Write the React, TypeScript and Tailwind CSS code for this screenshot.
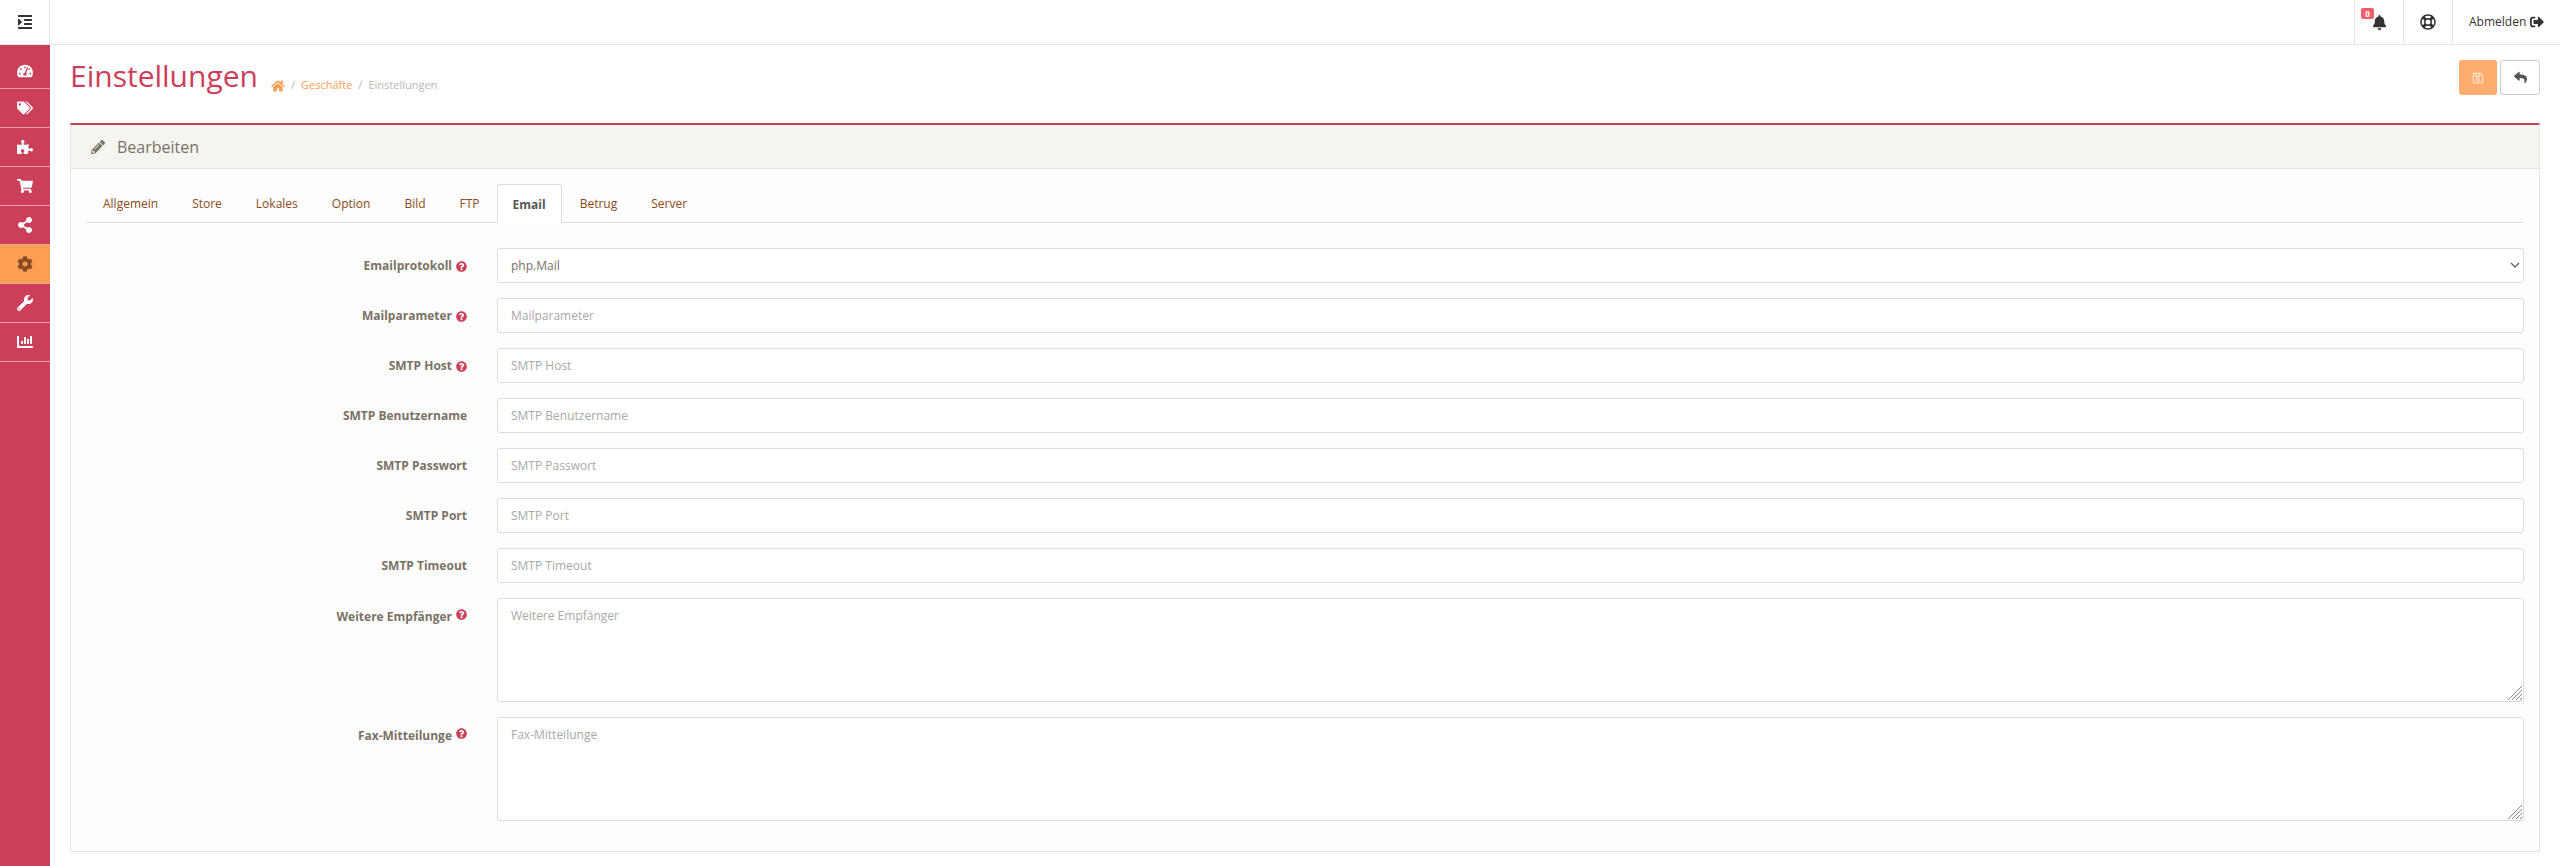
import React from "react";
import {
  FaTachometerAlt,
  FaTags,
  FaPuzzlePiece,
  FaShoppingCart,
  FaShareAlt,
  FaCog,
  FaWrench,
  FaChartBar,
  FaBell,
  FaRegLifeRing,
  FaSignOutAlt,
  FaHome,
  FaPencilAlt,
  FaRegSave,
  FaReply,
  FaQuestionCircle,
  FaIndent,
} from "react-icons/fa";

const navItems = [
  { icon: FaTachometerAlt, active: false },
  { icon: FaTags, active: false },
  { icon: FaPuzzlePiece, active: false },
  { icon: FaShoppingCart, active: false },
  { icon: FaShareAlt, active: false },
  { icon: FaCog, active: true },
  { icon: FaWrench, active: false },
  { icon: FaChartBar, active: false },
];

const tabs = ["Allgemein", "Store", "Lokales", "Option", "Bild", "FTP", "Email", "Betrug", "Server"];

const inputs = [
  { label: "Mailparameter", help: true },
  { label: "SMTP Host", help: true },
  { label: "SMTP Benutzername", help: false },
  { label: "SMTP Passwort", help: false },
  { label: "SMTP Port", help: false },
  { label: "SMTP Timeout", help: false },
];

const fieldClass =
  "w-full border border-[#dddddd] rounded-[3px] bg-white px-[13px] text-[12px] text-[#777067] placeholder:text-[#a8a8a8] outline-none";

const Label = ({ text, help, top }: { text: string; help: boolean; top?: boolean }) => (
  <label
    className={`flex justify-end gap-[4px] pr-[30px] text-[12px] font-bold text-[#7a7265] ${
      top ? "items-start pt-[10px]" : "items-center pt-[1px]"
    }`}
  >
    <span>{text}</span>
    {help && <FaQuestionCircle className="w-[11px] h-[11px] text-[#cc3f5a] mt-[1px]" />}
  </label>
);

// textarea with the hatched resize grip of the reference browser
const Area = ({ placeholder }: { placeholder: string }) => (
  <div className="relative">
    <textarea className={`${fieldClass} h-[104px] py-[8px] block resize-none`} placeholder={placeholder} />
    <svg className="absolute right-[2px] bottom-[2px] w-[14px] h-[14px]" viewBox="0 0 14 14" stroke="#8a8a8a" strokeWidth="1">
      <path d="M0 14 14 0M4 14 14 4M8 14 14 8M12 14 14 12" />
    </svg>
  </div>
);

export default function App() {
  return (
    <div className="flex min-h-[866px] bg-white font-['Open_Sans',sans-serif]">
      {/* Sidebar */}
      <aside className="w-[50px] shrink-0 bg-[#cb3f59] flex flex-col">
        <div className="h-[45px] bg-white border-r border-b border-[#e5e5e5] flex items-center justify-center">
          <FaIndent className="w-[16px] h-[16px] text-[#333333]" />
        </div>
        {navItems.map(({ icon: Icon, active }, i) => (
          <div
            key={i}
            className={`flex items-center justify-center border-b border-[#ee9dab] ${i === 0 ? "h-[44px] pt-[8px]" : "h-[39px]"} ${
              active ? "bg-[#ff9d52] text-[#8a4b20]" : "text-white"
            }`}
          >
            <Icon className="w-[16px] h-[16px]" />
          </div>
        ))}
      </aside>

      <div className="flex-1 min-w-0">
        {/* Top bar */}
        <header className="h-[45px] border-b border-[#e5e5e5] flex justify-end text-[#333333]">
          <div className="w-[49px] border-l border-[#e5e5e5] relative flex items-center justify-center">
            <FaBell className="w-[15px] h-[15px] ml-[1px]" />
            <span className="absolute left-[6px] top-[8px] w-[13px] h-[11px] rounded-[2px] bg-[#f0606a] text-white text-[8px] font-bold leading-[11px] text-center">
              0
            </span>
          </div>
          <div className="w-[49px] border-l border-[#e5e5e5] flex items-center justify-center">
            <FaRegLifeRing className="w-[16px] h-[16px]" />
          </div>
          <div className="w-[108px] border-l border-[#e5e5e5] flex items-center pl-[16px] gap-[4px] text-[12px]">
            <span>Abmelden</span>
            <FaSignOutAlt className="w-[14px] h-[14px]" />
          </div>
        </header>

        <main className="px-[20px]">
          {/* Page header */}
          <div className="h-[78px] flex items-start justify-between">
            <div className="flex items-center pt-[11px]">
              <h1 className="text-[30px] leading-[40px] font-normal text-[#cc3f5a]">Einstellungen</h1>
              <div className="flex items-center text-[11px] ml-[13px] mt-[19px] text-[#b8b8b8]">
                <FaHome className="w-[14px] h-[14px] text-[#ff9d52]" />
                <span className="mx-[6px]">/</span>
                <span className="text-[#ff9d52]">Geschäfte</span>
                <span className="mx-[6px]">/</span>
                <span>Einstellungen</span>
              </div>
            </div>
            <div className="flex gap-[3px] pt-[15px]">
              <button className="w-[38px] h-[35px] rounded-[3px] bg-[#ffad6e] flex items-center justify-center text-[#ffe6d3]">
                <FaRegSave className="w-[12px] h-[12px]" />
              </button>
              <button className="w-[40px] h-[35px] rounded-[3px] border border-[#cccccc] bg-white flex items-center justify-center text-[#555555]">
                <FaReply className="w-[13px] h-[13px]" />
              </button>
            </div>
          </div>

          {/* Panel */}
          <section className="border border-[#e5e5e5] border-t-2 border-t-[#cb3f59] h-[729px] bg-[#fdfdfd]">
            <div className="h-[44px] bg-[#f5f4f0] border-b border-[#e5e5e5] flex items-center pl-[20px] text-[#7a7265]">
              <FaPencilAlt className="w-[14px] h-[14px] mr-[12px]" />
              <span className="text-[16px]">Bearbeiten</span>
            </div>

            <div className="px-[15px] pt-[15px]">
              <ul className="flex h-[39px] border-b border-[#dddddd] text-[12px] text-[#8a4b20]">
                {tabs.map((tab) => (
                  <li
                    key={tab}
                    className={
                      tab === "Email"
                        ? "h-[39px] px-[15px] pt-[2px] mr-[1px] flex items-center font-bold text-[#555555] bg-white border border-[#dddddd] border-b-white rounded-t-[3px]"
                        : "h-[38px] px-[17px] pt-[2px] flex items-center"
                    }
                  >
                    {tab}
                  </li>
                ))}
              </ul>

              <form className="grid grid-cols-[411px_1fr] gap-y-[15px] pt-[25px]">
                <Label text="Emailprotokoll" help />
                <div className="relative">
                  <select className={`${fieldClass} h-[35px] appearance-none`} defaultValue="php.Mail">
                    <option>php.Mail</option>
                    <option>SMTP</option>
                  </select>
                  <svg
                    className="absolute right-[4px] top-[13px] w-[10px] h-[8px] pointer-events-none"
                    viewBox="0 0 10 8"
                    fill="none"
                    stroke="#6f685c"
                    strokeWidth="1.5"
                  >
                    <path d="M1 2l4 4 4-4" />
                  </svg>
                </div>

                {inputs.map((row) => (
                  <React.Fragment key={row.label}>
                    <Label text={row.label} help={row.help} />
                    <input className={`${fieldClass} h-[35px]`} placeholder={row.label} />
                  </React.Fragment>
                ))}

                <Label text="Weitere Empfänger" help top />
                <Area placeholder="Weitere Empfänger" />

                <Label text="Fax-Mitteilunge" help top />
                <Area placeholder="Fax-Mitteilunge" />
              </form>
            </div>
          </section>
        </main>
      </div>
    </div>
  );
}
